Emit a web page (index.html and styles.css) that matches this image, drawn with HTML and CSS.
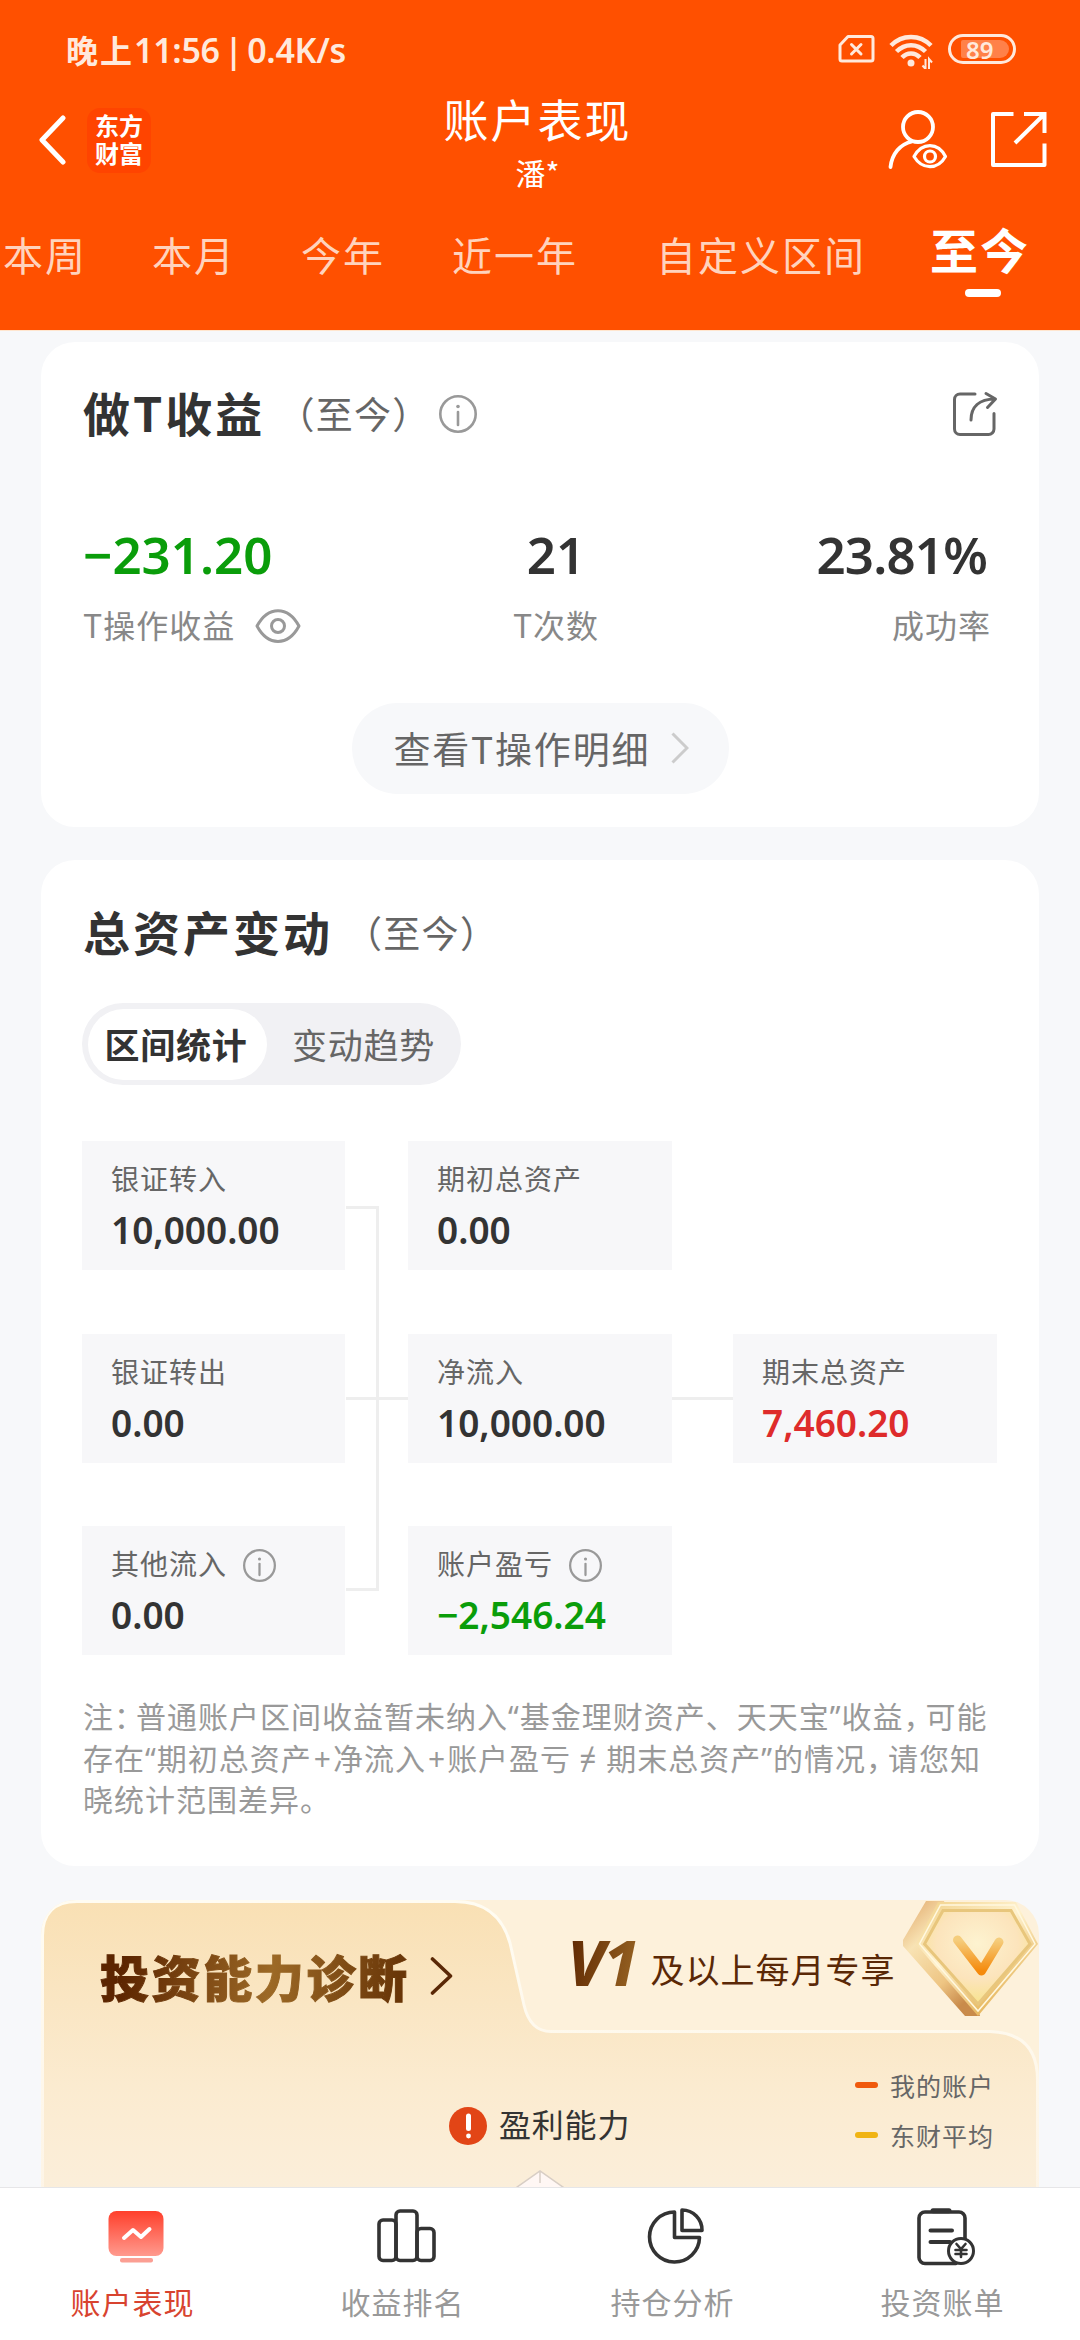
FILE: index.html
```html
<!DOCTYPE html>
<html lang="zh-CN">
<head>
    <meta charset="UTF-8">
    <meta name="viewport" content="width=device-width, initial-scale=1.0">
    <title>账户表现</title>
    <link rel="stylesheet" href="styles.css">
</head>
<body>
    <div class="app">
        <header class="header">
            <div class="status-bar">
                <span class="status-time">晚上<b>11:56 | 0.4K/s</b></span>
                <div class="status-icons">
                    <svg width="37" height="30" viewBox="0 0 37 30" fill="none" stroke="#ffe9dc" stroke-width="3" stroke-linejoin="round" stroke-linecap="round">
                        <path d="M10 2.5H33a2 2 0 0 1 2 2V25a2 2 0 0 1-2 2H4a2 2 0 0 1-2-2V11z"/>
                        <path d="M13.500 10.500l9.500 9.500M23 10.500l-9.500 9.500"/>
                    </svg>
                    <svg class="wifi" width="44" height="36" viewBox="0 0 44 36" fill="none" stroke="#ffe9dc" stroke-width="4.500">
                        <path d="M2 12.500C13 1 31 1 42 12.500"/>
                        <path d="M7.500 18.500C16 10 28 10 36.500 18.500"/>
                        <path d="M13 24.500C18 19 26 19 31 24.500"/>
                        <circle cx="22" cy="30" r="3.500" fill="#ffe9dc" stroke="none"/>
                        <path stroke-width="2" d="M36.500 26v10l-3-3.500M40 36V26l3 3.500"/>
                    </svg>
                    <div class="battery"><span>89</span></div>
                </div>
            </div>

            <div class="title-bar">
                <div class="title-left">
                    <svg width="27" height="50" viewBox="0 0 27 50" fill="none" stroke="#fff" stroke-width="5" stroke-linecap="round" stroke-linejoin="round">
                        <path d="M24 3L3 25l21 22"/>
                    </svg>
                    <div class="logo">东方<br>财富</div>
                </div>
                <div class="title-center">
                    <h1>账户表现</h1>
                    <p>潘*</p>
                </div>
                <div class="title-right">
                    <svg width="60" height="62" viewBox="888 110 60 62" fill="none" stroke="#fff" stroke-width="3.800" stroke-linecap="round">
                        <circle cx="918" cy="128" r="15"/>
                        <path d="M890.500 168C892 155 900 145 912 142.500"/>
                        <path stroke-width="3.200" stroke-linejoin="round" d="M914 157.500C922 143 938 143 945.500 157.500C938 171 922 171 914 157.500z"/>
                        <circle cx="930" cy="157.500" r="5.500" stroke-width="3.200"/>
                    </svg>
                    <svg width="58" height="60" viewBox="990 111 58 60" fill="none" stroke="#fff" stroke-width="4">
                        <path stroke-linejoin="round" d="M1013.500 115H993v51h51.500V144.500"/>
                        <path d="M1024 115h20.500v19M1044 115.500L1015 144"/>
                    </svg>
                </div>
            </div>

            <nav class="tabs">
                <a>本周</a>
                <a>本月</a>
                <a>今年</a>
                <a class="year">近一年</a>
                <a class="custom">自定义区间</a>
                <a class="active">至今</a>
            </nav>
        </header>

        <main class="content">
            <section class="card t-card">
                <div class="card-head">
                    <h2>做T收益</h2>
                    <span class="range">（至今）</span>
                    <svg class="info" viewBox="0 0 38 38"><circle cx="19" cy="19" r="17.700"/><path d="M19 17v13"/><circle class="dot" cx="19" cy="11.500" r="1.800"/></svg>
                    <svg class="share" width="46" height="46" viewBox="952 391 46 46" fill="none" stroke="#666" stroke-width="3" stroke-linecap="round" stroke-linejoin="round">
                        <path d="M975 394H960a5.500 5.500 0 0 0-5.500 5.500V429a5.500 5.500 0 0 0 5.500 5.500H988.500a5.500 5.500 0 0 0 5.500-5.500V413.500"/>
                        <path d="M971 420C971 407 979 399 995 399M986 393.500l9.500 5.500-8 8.500"/>
                    </svg>
                </div>
                <div class="stats">
                    <div class="stat">
                        <strong class="green">−231.20</strong>
                        <span>T操作收益
                            <svg width="46" height="36" viewBox="0 0 46 36" fill="none" stroke="#999" stroke-width="3" stroke-linejoin="round">
                                <path d="M2 18C13-2.500 33-2.500 44 18C33 38.500 13 38.500 2 18z"/>
                                <circle cx="23" cy="18" r="6.500"/>
                            </svg>
                        </span>
                    </div>
                    <div class="stat center">
                        <strong>21</strong>
                        <span>T次数</span>
                    </div>
                    <div class="stat right">
                        <strong>23.81%</strong>
                        <span>成功率</span>
                    </div>
                </div>
                <button class="detail-btn">查看T操作明细
                    <svg width="18" height="32" viewBox="0 0 18 32" fill="none" stroke="#ccc" stroke-width="3"><path d="M1.500 1.500L16 16L1.500 30.500"/></svg>
                </button>
            </section>

            <section class="card asset-card">
                <div class="card-head">
                    <h2>总资产变动</h2>
                    <span class="range">（至今）</span>
                </div>
                <div class="switch">
                    <span class="on">区间统计</span>
                    <span>变动趋势</span>
                </div>
                <div class="flow">
                    <div class="box r1 c1"><span>银证转入</span><strong>10,000.00</strong></div>
                    <div class="box r2 c1"><span>银证转出</span><strong>0.00</strong></div>
                    <div class="box r3 c1">
                        <span>其他流入<svg class="info" viewBox="0 0 38 38"><circle cx="19" cy="19" r="17.700"/><path d="M19 17v13"/><circle class="dot" cx="19" cy="11.500" r="1.800"/></svg></span>
                        <strong>0.00</strong>
                    </div>
                    <svg class="link-left" viewBox="0 0 63 514" fill="none" stroke="#eee" stroke-width="3">
                        <path d="M1 66.500H32.500V448.500H1M1 257.500H63"/>
                    </svg>
                    <div class="box r1 c2"><span>期初总资产</span><strong>0.00</strong></div>
                    <div class="box r2 c2"><span>净流入</span><strong>10,000.00</strong></div>
                    <div class="box r3 c2">
                        <span>账户盈亏<svg class="info" viewBox="0 0 38 38"><circle cx="19" cy="19" r="17.700"/><path d="M19 17v13"/><circle class="dot" cx="19" cy="11.500" r="1.800"/></svg></span>
                        <strong class="green">−2,546.24</strong>
                    </div>
                    <div class="link-right"></div>
                    <div class="box r2 c3"><span>期末总资产</span><strong class="red">7,460.20</strong></div>
                </div>
                <p class="note">注<i>：</i>普通账户区间收益暂未纳入“基金理财资产、天天宝”收益<i>，</i>可能<br>存在“期初总资产<em>+</em>净流入<em>+</em>账户盈亏<b>≠</b>期末总资产”的情况<i>，</i>请您知<br>晓统计范围差异。</p>
            </section>

            <section class="vip-card">
                <svg class="vip-bg" viewBox="41 1900 998 300">
                    <defs>
                        <linearGradient id="panel" x1="0" y1="0" x2="0" y2="1">
                            <stop offset="0" stop-color="#f9e0b4"/>
                            <stop offset="0.550" stop-color="#fbebd0"/>
                            <stop offset="1" stop-color="#fbf0df"/>
                        </linearGradient>
                        <linearGradient id="rim" x1="0" y1="0" x2="0" y2="1">
                            <stop offset="0" stop-color="#fffcf2"/>
                            <stop offset="1" stop-color="#fdf3e4"/>
                        </linearGradient>
                        <linearGradient id="gemSide" x1="0" y1="0" x2="0.600" y2="1">
                            <stop offset="0" stop-color="#e0a566"/>
                            <stop offset="0.350" stop-color="#f8e3b4"/>
                            <stop offset="0.750" stop-color="#eec583"/>
                            <stop offset="1" stop-color="#c98b4b"/>
                        </linearGradient>
                        <linearGradient id="gemRim" x1="0" y1="0" x2="0.700" y2="1">
                            <stop offset="0" stop-color="#f0cf85"/>
                            <stop offset="0.450" stop-color="#fff2cf"/>
                            <stop offset="1" stop-color="#e2ac4a"/>
                        </linearGradient>
                        <radialGradient id="gemFace" cx="0.500" cy="0.350" r="0.700">
                            <stop offset="0" stop-color="#fdf3d0"/>
                            <stop offset="0.550" stop-color="#fce4bc"/>
                            <stop offset="1" stop-color="#f7e384"/>
                        </radialGradient>
                        <linearGradient id="gemV" x1="0" y1="0" x2="0" y2="1">
                            <stop offset="0" stop-color="#f5cd7c"/>
                            <stop offset="1" stop-color="#f58a0c"/>
                        </linearGradient>
                    </defs>
                    <path fill="url(#panel)" stroke="url(#rim)" stroke-width="3" d="M42.500 2240V1936Q42.500 1901.500 77 1901.500H455C487 1901.500 503 1918 510 1943L524 2005Q530 2031.500 551 2031.500H990Q1037.500 2033 1037.500 2080V2240z"/>
                    <path fill="url(#gemSide)" d="M926 1901H944L962 1960L980 2016H965L903 1946V1940z"/>
                    <path fill="url(#gemRim)" d="M938 1902H1016L1038 1944L978 2016L916 1944z"/>
                    <path fill="none" stroke="#fff8df" stroke-width="1.500" d="M940.500 1905H1014.500L1035 1944L978 2011L919.500 1944z"/>
                    <path fill="url(#gemFace)" stroke="#e8c67c" stroke-width="3" d="M943 1910.500H1011L1030 1944L978 2004L924.500 1944z"/>
                    <path fill="none" stroke="url(#gemV)" stroke-width="9" stroke-linecap="round" stroke-linejoin="round" d="M957.500 1940L981.500 1971L999 1942"/>
                    <path fill="#fff7f4" stroke="#d8cec5" stroke-width="1.500" d="M510 2192L540 2171L570 2192M540 2171V2183"/>
                </svg>
                <div class="vip-head">
                    <h2>投资能力诊断</h2>
                    <svg class="vip-arrow" width="23" height="38" viewBox="0 0 23 38" fill="none" stroke="#5a2806" stroke-width="3.600" stroke-linecap="round" stroke-linejoin="round"><path d="M2.500 2L20.500 19L2.500 36"/></svg>
                    <em>V1</em>
                    <span>及以上每月专享</span>
                </div>
                <div class="vip-body">
                    <div class="ability">
                        <svg width="38" height="38" viewBox="0 0 38 38"><circle cx="19" cy="19" r="19" fill="#e24516"/><path d="M19.500 9v12.500" stroke="#fff" stroke-width="5" stroke-linecap="round"/><circle cx="19.500" cy="29" r="2.400" fill="#fff"/></svg>
                        <span>盈利能力</span>
                    </div>
                    <ul class="legend">
                        <li>我的账户</li>
                        <li class="avg">东财平均</li>
                    </ul>
                </div>
            </section>
        </main>

        <footer class="tabbar">
            <a class="current">
                <svg viewBox="0 0 60 60">
                    <defs><linearGradient id="screen" x1="0" y1="0" x2="0" y2="1"><stop offset="0" stop-color="#ff3f2b"/><stop offset="1" stop-color="#ff9a8e"/></linearGradient></defs>
                    <rect x="2.500" y="3" width="55" height="45" rx="8" fill="url(#screen)"/>
                    <rect x="14" y="50" width="33" height="4.500" rx="2" fill="#fb9f94"/>
                    <path d="M18 30l9-8 8 7 8.500-8" fill="none" stroke="#fff" stroke-width="4" stroke-linecap="round" stroke-linejoin="round"/>
                </svg>
                账户表现
            </a>
            <a>
                <svg viewBox="0 0 60 60" fill="none" stroke="#333" stroke-width="3.600">
                    <rect x="3" y="12" width="17" height="40.500" rx="4"/>
                    <rect x="20" y="3" width="21" height="49.500" rx="4"/>
                    <rect x="41" y="20.500" width="17" height="32" rx="4"/>
                </svg>
                收益排名
            </a>
            <a>
                <svg viewBox="0 0 60 60" fill="none" stroke="#333" stroke-width="3.600" stroke-linejoin="round">
                    <path d="M28.500 4A25 25 0 1 0 53.500 29.500H28.500z"/>
                    <path d="M36 2A20 20 0 0 1 56 22.500H36z"/>
                </svg>
                持仓分析
            </a>
            <a>
                <svg viewBox="0 0 60 60" fill="none" stroke="#333" stroke-width="3.600" stroke-linecap="round">
                    <path d="M40 55.500H9a6 6 0 0 1-6-6V10a6 6 0 0 1 6-6H43a6 6 0 0 1 6 6V31"/>
                    <path d="M17 2.800H33" stroke-width="5"/>
                    <path d="M14.500 22.500H36M14.500 34H34" stroke-width="4"/>
                    <circle cx="45" cy="43" r="12.500" stroke-width="3" fill="#fff"/>
                    <path stroke-width="2.600" d="M40.500 36l4.500 5 4.500-5M45 41v8M39.500 42h11M39.500 46h11"/>
                </svg>
                投资账单
            </a>
        </footer>
    </div>
</body>
</html>
```
FILE: styles.css
```css
* {
    box-sizing: border-box;
    margin: 0;
    padding: 0;
}

body {
    background-color: #f7f8fa;
    font-family: "Noto Sans CJK SC", sans-serif;
    color: #333;
    overflow: hidden;
}

svg {
    display: block;
    flex-shrink: 0;
}

.app {
    width: 1080px;
    height: 2340px;
    display: flex;
    flex-direction: column;
    overflow: hidden;
}

/* header */
.header {
    height: 331px;
    flex-shrink: 0;
    background-color: #ff5000;
    border-bottom: 1px solid #ffe6cf;
    color: #fff;
}

.status-bar {
    height: 80px;
    padding: 18px 64px 0 66px;
    display: flex;
    align-items: center;
    justify-content: space-between;
}

.status-time {
    color: #ffe9dc;
    font-size: 32px;
    font-weight: 700;
    letter-spacing: 2px;
    line-height: 40px;
}

.status-time b {
    font-family: "Noto Sans", sans-serif;
    font-weight: 600;
    font-size: 34px;
    letter-spacing: -0.3px;
    word-spacing: -4px;
}

.status-icons {
    display: flex;
    align-items: center;
}

.wifi {
    margin: 4px 15px 0 14px;
}

.battery {
    width: 68px;
    height: 30px;
    padding: 4px 4px 4px 10px;
    border: 3px solid #ffe9dc;
    border-radius: 15px;
}

.battery span {
    display: block;
    height: 18px;
    margin-top: -1px;
    padding-left: 5px;
    border-radius: 2px 9px 9px 2px;
    background-color: #ff8149;
    color: #ffe9dc;
    font: 600 24px/19px "Noto Sans", sans-serif;
}

.title-bar {
    height: 120px;
    padding: 0 32px 0 39px;
    display: grid;
    grid-template-columns: 1fr auto 1fr;
}

.title-left {
    display: flex;
    align-items: center;
    gap: 21px;
}

.logo {
    width: 64px;
    height: 65px;
    padding-top: 3px;
    border-radius: 13px;
    background-color: #ff4400;
    text-align: center;
    font-size: 24px;
    font-weight: 700;
    line-height: 28px;
}

.title-center {
    padding-top: 12px;
    margin-left: -12px;
    text-align: center;
}

.title-center h1 {
    font-size: 45px;
    font-weight: 400;
    letter-spacing: 2px;
    line-height: 54px;
}

.title-center p {
    margin-top: -1px;
    font-size: 30px;
    line-height: 54px;
}

.title-right {
    display: flex;
    align-items: center;
    justify-content: flex-end;
    gap: 42px;
}

.tabs {
    padding: 27px 0 0 3px;
    display: flex;
    gap: 65px;
    white-space: nowrap;
}

.tabs a {
    color: #ffd3bd;
    font-size: 40px;
    letter-spacing: 2px;
    line-height: 54px;
}

.tabs .year {
    margin-left: 2px;
}

.tabs .custom {
    margin-left: 13px;
}

.tabs .active {
    margin-left: -1px;
    color: #fff;
    font-size: 48px;
    font-weight: 700;
    line-height: 42px;
}

.tabs .active::after {
    content: "";
    display: block;
    width: 36px;
    height: 8px;
    margin: 20px 0 0 35px;
    border-radius: 4px;
    background-color: #fff;
}

/* cards */
.content {
    flex: 1;
    min-height: 0;
    padding: 11px 41px 0;
    overflow: hidden;
}

.card {
    padding: 0 42px;
    border-radius: 34px;
    background-color: #fff;
}

.card-head {
    display: flex;
    align-items: center;
    height: 60px;
}

.card-head h2 {
    margin-top: -4px;
    font-size: 47px;
    font-weight: 700;
    letter-spacing: 3px;
    line-height: 60px;
}

.range {
    margin: -3px 0 0 12px;
    color: #666;
    font-size: 37px;
    letter-spacing: 1.300px;
}

.info {
    width: 38px;
    height: 38px;
    fill: none;
    stroke: #999;
    stroke-width: 2.6;
    stroke-linecap: round;
}

.info .dot {
    fill: #999;
    stroke: none;
}

.card-head .info {
    margin-left: 8px;
}

.share {
    margin: 0 -1px 0 auto;
}

.t-card {
    height: 485px;
    padding-top: 42px;
}

.stats {
    display: grid;
    grid-template-columns: 1fr 1fr 1fr;
    margin-top: 80px;
    padding-right: 6px;
}

.stat strong {
    display: block;
    font-family: "Noto Sans", sans-serif;
    font-size: 51px;
    font-weight: 600;
    line-height: 60px;
}

.stat span {
    display: flex;
    align-items: center;
    margin-top: 22px;
    color: #888;
    font-size: 32px;
    letter-spacing: 1px;
    line-height: 36px;
    height: 36px;
}

.stat span svg {
    margin: 4px 0 0 20px;
}

.stat.center {
    text-align: center;
    padding-left: 38px;
}

.stat.center span {
    justify-content: center;
}

.stat.right {
    text-align: right;
}

.stat.right strong {
    padding-right: 4px;
    letter-spacing: -0.800px;
}

.stat.right span {
    justify-content: flex-end;
}

.green {
    color: #0a9d0a;
}

.red {
    color: #de2b2b;
}

.detail-btn {
    display: flex;
    align-items: center;
    justify-content: space-between;
    width: 377px;
    height: 91px;
    margin: 61px auto 0;
    padding: 0 40px 2px 42px;
    border: none;
    border-radius: 46px;
    background-color: #f7f8fa;
    color: #666;
    font-family: inherit;
    font-size: 37px;
    letter-spacing: 1.800px;
}

.asset-card {
    height: 1006px;
    margin-top: 33px;
    padding-top: 43px;
}

.switch {
    display: flex;
    width: 379px;
    height: 82px;
    margin: 40px 0 0 -1px;
    padding: 6px;
    border-radius: 41px;
    background-color: #f1f1f4;
}

.switch span {
    flex: 1;
    padding-left: 5px;
    border-radius: 36px;
    color: #666;
    text-align: center;
    font-size: 35px;
    letter-spacing: 0.800px;
    line-height: 69px;
}

.switch .on {
    flex: 0 0 179px;
    height: 71px;
    padding: 0 3px 0 0;
    background-color: #fff;
    color: #333;
    font-weight: 700;
}

.flow {
    display: grid;
    grid-template-columns: 263px 63px 264px 61px 264px;
    grid-template-rows: repeat(3, 129px);
    row-gap: 63.5px;
    margin: 56px 0 0 -1px;
}

.box {
    padding: 16px 0 0 29px;
    background-color: #f7f7f9;
}

.box span {
    display: flex;
    align-items: center;
    height: 42px;
    color: #666;
    font-size: 28px;
    letter-spacing: 1px;
}

.box strong {
    display: block;
    margin-top: 4px;
    font-family: "Noto Sans", sans-serif;
    font-size: 37px;
    font-weight: 600;
    line-height: 54px;
}

.box .info {
    width: 33px;
    height: 33px;
    margin: 4px 0 0 16px;
}

.c1 { grid-column: 1; }
.c2 { grid-column: 3; }
.c3 { grid-column: 5; }
.r1 { grid-row: 1; }
.r2 { grid-row: 2; }
.r3 { grid-row: 3; }

.link-left {
    grid-column: 2;
    grid-row: 1 / 4;
    width: 63px;
    height: 514px;
}

.link-right {
    grid-column: 4;
    grid-row: 2;
    height: 3px;
    margin-top: 63px;
    background-color: #eee;
}

.note {
    margin-top: 40px;
    color: #999;
    font-family: "Noto Sans", "Noto Sans CJK SC", sans-serif;
    font-size: 30px;
    letter-spacing: 1px;
    line-height: 41px;
    white-space: nowrap;
}

/* half-width punctuation */
.note i {
    margin-right: 6px;
    font-style: normal;
    font-family: "Noto Sans CJK SC", sans-serif;
    font-feature-settings: "halt";
}

.note em {
    margin: 0 1px 0 2px;
    font-style: normal;
}

.note b {
    margin: 0 9px 0 8px;
    font-weight: 400;
}

/* vip card */
.vip-card {
    position: relative;
    height: 300px;
    margin-top: 34px;
    border-radius: 34px 34px 0 0;
    background-color: #fdf1db;
    overflow: hidden;
}

.vip-bg {
    position: absolute;
    left: 0;
    top: 0;
    width: 998px;
    height: 300px;
}

.vip-head {
    position: relative;
    display: flex;
    align-items: center;
    height: 158px;
    padding-left: 59px;
    white-space: nowrap;
}

.vip-head h2 {
    margin-top: -6px;
    background: linear-gradient(100deg, #5c2500 8%, #9c6926 55%, #693608 95%);
    background-clip: text;
    -webkit-background-clip: text;
    -webkit-text-stroke: 1px transparent;
    color: transparent;
    font-size: 49px;
    font-weight: 900;
    letter-spacing: 2.600px;
    line-height: 60px;
}

.vip-arrow {
    margin: -6px 0 0 20px;
}

.vip-head em {
    width: 72px;
    margin: -34px 0 0 115px;
    background: linear-gradient(100deg, #5c2500, #9c6926);
    background-clip: text;
    -webkit-background-clip: text;
    color: transparent;
    font: italic 800 63px/80px "Noto Sans", sans-serif;
    letter-spacing: -2px;
}

.vip-head span {
    margin: -22px 0 0 11px;
    color: #5a2806;
    font-size: 34px;
    letter-spacing: 1px;
}

.vip-body {
    position: relative;
    display: flex;
    justify-content: space-between;
    padding: 2px 45px 0 408px;
}

.ability {
    display: flex;
    align-items: center;
    gap: 12px;
    height: 38px;
    margin-top: 47px;
    font-size: 32px;
    letter-spacing: 0.800px;
}

.ability span {
    margin-top: -7px;
}

.legend {
    list-style: none;
}

.legend li {
    display: flex;
    align-items: center;
    gap: 12px;
    height: 50px;
    color: #666;
    font-size: 25px;
    letter-spacing: 1px;
}

.legend li::before {
    content: "";
    width: 23px;
    height: 6px;
    border-radius: 3px;
    background-color: #f0590c;
}

.legend .avg::before {
    background-color: #f0b414;
}

/* bottom tab bar */
.tabbar {
    display: grid;
    grid-template-columns: repeat(4, 1fr);
    flex-shrink: 0;
    height: 153px;
    border-top: 1px solid #e6e6e8;
    background-color: #fff;
}

.tabbar a {
    padding: 20px 5px 0 0;
    color: #999;
    text-align: center;
    font-size: 30px;
    letter-spacing: 1px;
    line-height: 40px;
}

.tabbar svg {
    width: 60px;
    height: 60px;
    margin: 0 auto 13px;
    transform: translateX(3px);
}

.tabbar .current {
    color: #d8432f;
}
```
